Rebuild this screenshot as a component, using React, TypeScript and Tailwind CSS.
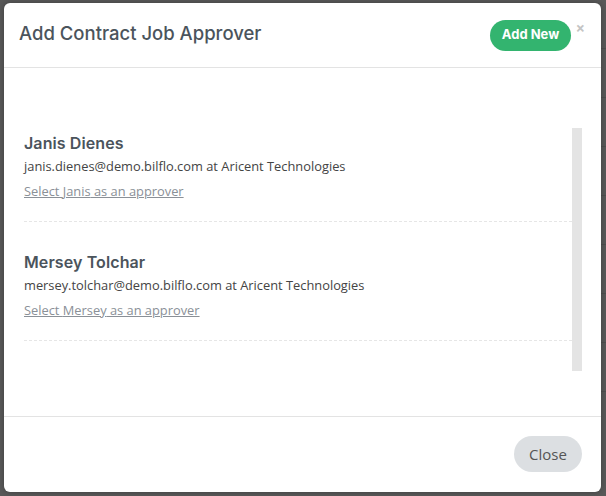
const approvers = [
  {
    first: "Janis",
    name: "Janis Dienes",
    email: "janis.dienes@demo.bilflo.com",
    company: "Aricent Technologies",
  },
  {
    first: "Mersey",
    name: "Mersey Tolchar",
    email: "mersey.tolchar@demo.bilflo.com",
    company: "Aricent Technologies",
  },
];

const App = () => {
  return (
    <div className="relative h-[496px] w-[606px] overflow-hidden bg-[#595959] pl-[4px] pt-[3px] font-['Open_Sans',sans-serif]">
      {/* faint table rows behind the overlay */}
      <div className="absolute right-0 top-0 flex h-full w-[5px] flex-col">
        {[60, 140, 190, 240, 300, 360, 420, 470].map((y) => (
          <div key={y} className="h-[49px] border-b border-[#4f4f4f]" />
        ))}
      </div>

      <div className="relative flex h-[489px] w-[597px] flex-col rounded-[6px] bg-white shadow-[0_0_6px_rgba(0,0,0,0.3)]">
        <div className="flex h-[65px] items-center border-b border-[#e3e3e3] pl-[15px] pr-[30px]">
          <h2 className="flex-1 pb-[2px] font-['Inter',sans-serif] text-[18.5px] font-medium text-[#4b545c]">
            Add Contract Job Approver
          </h2>
          <button className="h-[31px] w-[81px] rounded-full bg-[#33b46f] font-['Inter',sans-serif] text-[13px] font-bold text-white">
            Add New
          </button>
          <span className="absolute right-[16px] top-[17px] text-[16px] font-bold leading-none text-[#c4c4c4]">
            ×
          </span>
        </div>

        <div className="flex-1 pl-[20px] pt-[60px]">
          <div className="flex h-[243px] w-[558px]">
            <div className="flex-1">
              {approvers.map((a, i) => (
                <div
                  key={a.name}
                  className={
                    i === 0
                      ? "border-b border-dashed border-[#e6e6e6] pb-[20px] pt-[5px]"
                      : "border-b border-dashed border-[#e6e6e6] pb-[20px] pt-[30px]"
                  }
                >
                  <div className="font-['Inter',sans-serif] text-[16px] font-semibold leading-[20px] tracking-[0.1px] text-[#4b545c]">
                    {a.name}
                  </div>
                  <div className="mt-[3px] text-[12.85px] leading-[20px] text-[#444]">
                    {a.email} at {a.company}
                  </div>
                  <a className="mt-[5px] block text-[12.85px] leading-[20px] text-[#8a9097] underline">
                    Select {a.first} as an approver
                  </a>
                </div>
              ))}
            </div>
            <div className="w-[10px] bg-[#e4e4e4]" />
          </div>
        </div>

        <div className="flex h-[76px] items-start justify-end border-t border-[#e3e3e3] pr-[19px] pt-[19px]">
          <button className="h-[36px] w-[68px] rounded-full bg-[#dcdfe2] text-[15px] text-[#555]">
            Close
          </button>
        </div>
      </div>
    </div>
  );
};

export default App;
